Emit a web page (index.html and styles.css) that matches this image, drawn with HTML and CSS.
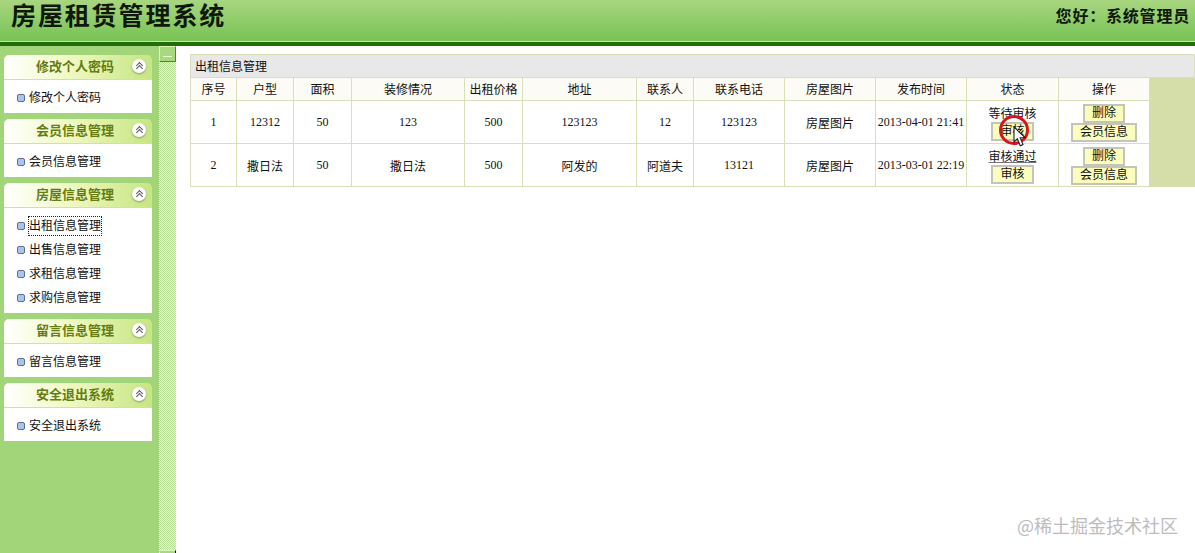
FILE: index.html
```html
<!DOCTYPE html>
<html lang="zh-CN">
<head>
  <meta charset="UTF-8" />
  <title>房屋租赁管理系统</title>
  <link rel="stylesheet" href="styles.css">
</head>
<body>
  <div class="top">
    <div class="logo">房屋租赁管理系统</div>
    <div class="hello">您好：系统管理员</div>
  </div>

  <div class="main">
    <div class="side">
      <div class="panel">
        <div class="panel-title"><span>修改个人密码</span><i class="fold"></i></div>
        <ul class="panel-body"><li><a>修改个人密码</a></li></ul>
      </div>
      <div class="panel">
        <div class="panel-title"><span>会员信息管理</span><i class="fold"></i></div>
        <ul class="panel-body"><li><a>会员信息管理</a></li></ul>
      </div>
      <div class="panel">
        <div class="panel-title"><span>房屋信息管理</span><i class="fold"></i></div>
        <ul class="panel-body">
          <li><a class="focus">出租信息管理</a></li>
          <li><a>出售信息管理</a></li>
          <li><a>求租信息管理</a></li>
          <li><a>求购信息管理</a></li>
        </ul>
      </div>
      <div class="panel">
        <div class="panel-title"><span>留言信息管理</span><i class="fold"></i></div>
        <ul class="panel-body"><li><a>留言信息管理</a></li></ul>
      </div>
      <div class="panel">
        <div class="panel-title"><span>安全退出系统</span><i class="fold"></i></div>
        <ul class="panel-body"><li><a>安全退出系统</a></li></ul>
      </div>
    </div>

    <div class="splitter">
      <div class="split-btn"></div>
      <div class="split-end"></div>
    </div>

    <div class="content">
      <table class="grid">
        <colgroup>
          <col class="c1"><col class="c2"><col class="c3"><col class="c4"><col class="c5"><col class="c6"><col class="c7">
          <col class="c8"><col class="c9"><col class="c10"><col class="c11"><col class="c12"><col>
        </colgroup>
        <tr class="caption-row"><td colspan="13">出租信息管理</td></tr>
        <tr class="head-row">
          <td>序号</td><td>户型</td><td>面积</td><td>装修情况</td><td>出租价格</td><td>地址</td><td>联系人</td>
          <td>联系电话</td><td>房屋图片</td><td>发布时间</td><td>状态</td><td>操作</td><td class="blank" rowspan="3"></td>
        </tr>
        <tr class="data-row">
          <td>1</td><td>12312</td><td>50</td><td>123</td><td>500</td>
          <td>123123</td><td>12</td><td>123123</td><td>房屋图片</td>
          <td>2013-04-01 21:41</td>
          <td class="status">
            <div>等待审核</div>
            <div class="audit-wrap">
              <button class="btn">审核</button>
              <span class="click-ring"></span>
              <svg class="pointer" width="14" height="21" viewBox="0 0 14 21"><path d="M1 1v15l3.4-3.2 2.8 7 2.8-1.2-2.8-6.8h5z" fill="#fff" stroke="#222" stroke-width="1.1"/></svg>
            </div>
          </td>
          <td class="ops"><button class="btn">删除</button><button class="btn">会员信息</button></td>
        </tr>
        <tr class="data-row">
          <td>2</td><td>撒日法</td><td>50</td><td>撒日法</td><td>500</td>
          <td>阿发的</td><td>阿道夫</td><td>13121</td><td>房屋图片</td>
          <td>2013-03-01 22:19</td>
          <td class="status">
            <div class="passed">审核通过</div>
            <div class="audit-wrap"><button class="btn">审核</button></div>
          </td>
          <td class="ops"><button class="btn">删除</button><button class="btn">会员信息</button></td>
        </tr>
      </table>
    </div>
  </div>

  <div class="watermark">@稀土掘金技术社区</div>
</body>
</html>
```

FILE: styles.css
```css
* { box-sizing: border-box; }

html, body { height: 100%; }

body {
  margin: 0;
  overflow: hidden;
  font-family: "Liberation Serif", "Noto Sans CJK SC", serif;
  font-size: 12px;
  color: #111;
  background: #fff;
}

.top {
  height: 46px;
  display: flex;
  justify-content: space-between;
  align-items: flex-start;
  padding: 0 5px 0 11px;
  background: linear-gradient(to bottom, #a9d680, #7cc458 88%);
  border-bottom: 4px solid #236c0a;
  box-shadow: inset 0 -1px 0 #c4e59b;
}

.logo {
  font-family: "Liberation Sans", "Noto Sans CJK SC", sans-serif;
  font-size: 25px;
  font-weight: 700;
  line-height: 33px;
  letter-spacing: 1.9px;
  color: #10180a;
}

.hello {
  font-family: "Liberation Sans", "Noto Sans CJK SC", sans-serif;
  font-size: 16px;
  font-weight: 700;
  line-height: 33px;
  letter-spacing: 0.8px;
  color: #10180a;
}

.main {
  height: 507px;
  display: flex;
}

/* left menu */
.side {
  width: 159px;
  flex: none;
  padding: 9px 7px 0 4px;
  background: #a2d579;
}

.panel { margin-bottom: 6px; }

.panel-title {
  height: 25px;
  display: flex;
  align-items: center;
  padding: 0 6px 3px 32px;
  border-radius: 5px 5px 0 0;
  border-bottom: 1px solid #cfe2a6;
  background: linear-gradient(to right, #fff, #f0f8c2 45%, #c5e682);
  font-family: "Noto Sans CJK SC", sans-serif;
  font-size: 13px;
  font-weight: 700;
  color: #647d10;
}

.panel-title span { flex: 1; }

.fold {
  width: 14px;
  height: 14px;
  position: relative;
  border-radius: 50%;
  background: #fff;
  box-shadow: 0 1px 2px #8a9a6a;
}

.fold::before,
.fold::after {
  content: '';
  position: absolute;
  left: 5px;
  width: 4px;
  height: 4px;
  border-left: 1px solid #555;
  border-top: 1px solid #555;
  transform: rotate(45deg);
}

.fold::before { top: 4px; }
.fold::after { top: 7px; }

.panel-body {
  list-style: none;
  margin: 0;
  padding: 4px 0 5px;
  background: #fff;
}

.panel-body li {
  height: 24px;
  display: flex;
  align-items: center;
  padding-left: 25px;
  position: relative;
  font-family: "Noto Sans CJK SC", sans-serif;
  font-size: 12px;
}

.panel-body li::before {
  content: '';
  position: absolute;
  left: 13px;
  top: 10px;
  width: 6px;
  height: 6px;
  border: 1px solid #5f6f88;
  border-radius: 2px;
  background: #a9c4ee;
}

.focus {
  display: block;
  margin-top: 3px;
  padding-bottom: 3px;
  line-height: 15px;
  outline: 1px dotted #222;
}

/* splitter */
.splitter {
  width: 17px;
  flex: none;
  position: relative;
  background-color: #d2ecac;
  background-image: repeating-conic-gradient(#b4df92 0 25%, #e9f7d3 0 50%);
  background-size: 2px 2px;
}

.split-btn {
  position: absolute;
  top: 0;
  left: 0;
  width: 17px;
  height: 16px;
  background: #a9d97f;
  border: 1px solid #dff3bb;
  border-bottom-color: #4c8a22;
  border-right-color: #4c8a22;
}

.split-btn::after {
  content: '';
  position: absolute;
  left: 3px;
  top: 9px;
  width: 9px;
  height: 1px;
  background: #e9f6d4;
}

.split-end {
  position: absolute;
  bottom: 0;
  left: 1px;
  width: 16px;
  height: 3px;
  background: #a9d97f;
  border-top: 1px solid #dff3bb;
  border-right: 1px solid #111;
}

/* table */
.content {
  flex: 1;
  min-width: 0;
  padding: 8px 0 0 14px;
}

.grid {
  width: 1005px;
  table-layout: fixed;
  border-collapse: collapse;
  font-family: "Liberation Serif", "Noto Sans CJK SC", serif;
  font-size: 12px;
}

.c1 { width: 46px; }
.c2 { width: 57px; }
.c3 { width: 58px; }
.c4 { width: 113px; }
.c5 { width: 58px; }
.c6 { width: 114px; }
.c7 { width: 57px; }
.c8 { width: 91px; }
.c9 { width: 91px; }
.c10 { width: 91px; }
.c11 { width: 92px; }
.c12 { width: 91px; }

.grid td {
  border: 1px solid #dadfb8;
  padding: 0;
  text-align: center;
  vertical-align: middle;
}

.caption-row td {
  height: 23px;
  padding-left: 4px;
  text-align: left;
  background: #e8e8e8;
}

.head-row td {
  height: 23px;
  background: #fdfbf5;
}

.data-row td {
  height: 43px;
  padding-top: 1px;
}

.grid .blank {
  background: #d5dea8;
  border-color: #d5dea8;
}

.status { line-height: 16px; }

.grid .status,
.grid .ops { padding-top: 2px; }

.passed { text-decoration: underline; text-decoration-color: #777; }

.audit-wrap {
  position: relative;
  height: 19px;
  display: flex;
  justify-content: center;
  align-items: flex-start;
}

.btn {
  display: block;
  height: 19px;
  margin: 0 auto;
  padding: 0 7px;
  border: 2px solid #c4c4b8;
  border-radius: 0;
  background: #fbfdbc;
  font-family: "Liberation Serif", "Noto Sans CJK SC", serif;
  font-size: 12px;
  line-height: 15px;
  color: #111;
}

.click-ring {
  position: absolute;
  left: 32px;
  top: -7px;
  width: 30px;
  height: 30px;
  border: 3px solid #d8141c;
  border-radius: 50%;
}

.pointer {
  position: absolute;
  left: 46px;
  top: 4px;
}

.watermark {
  position: absolute;
  right: 17px;
  bottom: 15px;
  font-family: "Noto Sans CJK SC", sans-serif;
  font-size: 18px;
  color: #bcbcbc;
}
```
